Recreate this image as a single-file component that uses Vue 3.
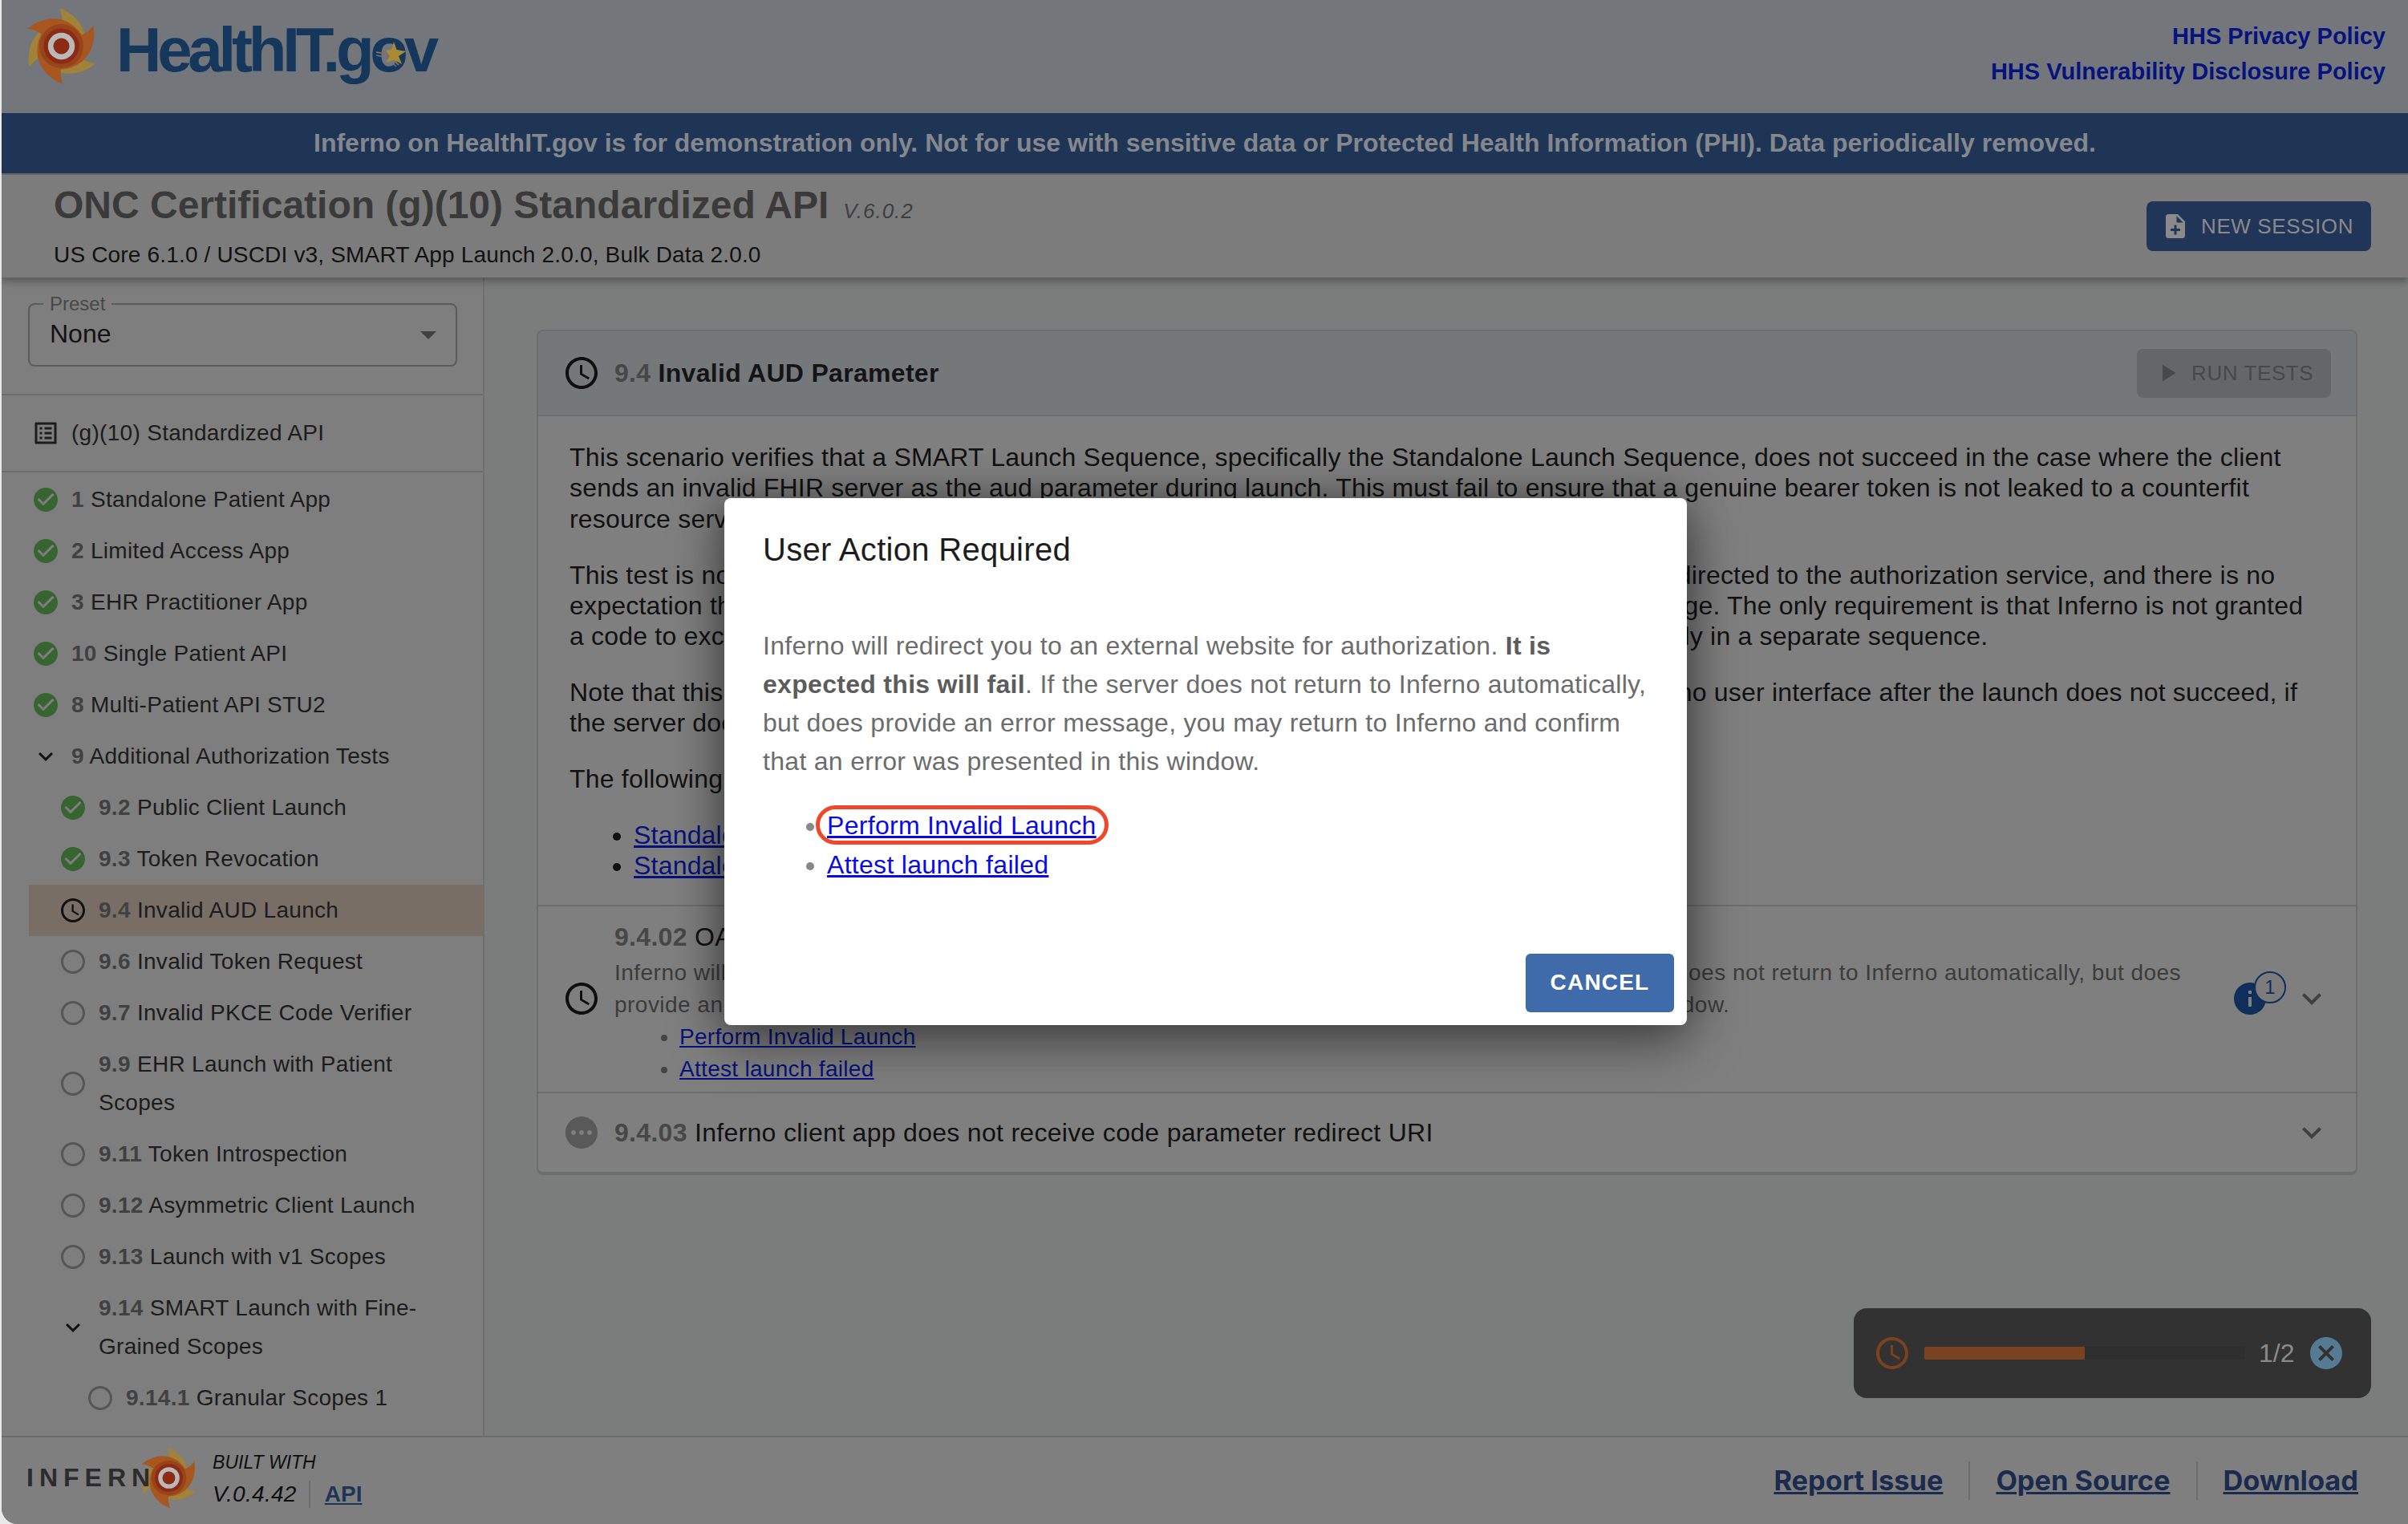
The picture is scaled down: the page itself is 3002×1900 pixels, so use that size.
<template>
  <div class="page">
    <header class="top-bar">
      <div class="brand">
        <svg class="swirl swirl-large" viewBox="-160 -160 320 320">
          <path v-for="blade in blades" :key="blade.angle" :fill="blade.color" :d="bladePath" :transform="`rotate(${blade.angle})`" />
          <circle r="82" fill="#97431c" />
          <circle r="66" fill="#8c2a14" />
          <circle r="50" fill="#b9b9b9" />
          <circle r="30" fill="#8c2a14" />
        </svg>
        <span class="brand-name">HealthIT.gov</span>
        <svg class="brand-star" viewBox="0 0 44 44">
          <path d="M3 19Q18 20 31 35" fill="none" stroke="#8a6a62" stroke-width="2" />
          <path d="M3 23Q16 24 28 37" fill="none" stroke="#5c7a98" stroke-width="1.5" />
          <path fill="#a98a34" d="M25 6l3.5 10L40 18l-9 6 4 10-9-5-11 3 5-8-5-7 7-1z" />
        </svg>
      </div>
      <nav class="policy-links">
        <a>HHS Privacy Policy</a>
        <a>HHS Vulnerability Disclosure Policy</a>
      </nav>
    </header>

    <div class="banner">
      Inferno on HealthIT.gov is for demonstration only. Not for use with sensitive data or Protected Health Information (PHI). Data periodically removed.
    </div>

    <section class="suite-bar">
      <div>
        <div class="suite-title">
          <h1>ONC Certification (g)(10) Standardized API</h1>
          <span class="suite-version">V.6.0.2</span>
        </div>
        <div class="suite-sub">US Core 6.1.0 / USCDI v3, SMART App Launch 2.0.0, Bulk Data 2.0.0</div>
      </div>
      <button class="new-session">
        <svg viewBox="0 0 24 24"><path :d="icons.noteAdd" /></svg>
        NEW SESSION
      </button>
    </section>

    <div class="workspace">
      <aside class="sidebar">
        <div class="preset-wrap">
          <fieldset class="preset">
            <legend>Preset</legend>
            <span>None</span>
            <i class="preset-arrow"></i>
          </fieldset>
        </div>
        <div class="suite-link">
          <svg viewBox="0 0 24 24"><path :d="icons.listAlt" /></svg>
          <span>(g)(10) Standardized API</span>
        </div>
        <div
          v-for="item in treeItems"
          :key="item.num"
          class="tree-row"
          :class="[`level-${item.level}`, { selected: item.selected }]"
        >
          <svg :class="`status-${item.status}`" viewBox="0 0 24 24"><path :d="statusPath(item.status)" /></svg>
          <span class="tree-label"><b>{{ item.num }}</b> {{ item.title }}</span>
        </div>
      </aside>

      <main class="content">
        <article class="test-card">
          <div class="card-head">
            <svg class="big-icon" viewBox="0 0 24 24"><path :d="icons.clock" /></svg>
            <h2><b>9.4</b> Invalid AUD Parameter</h2>
            <button class="run-tests">
              <svg viewBox="0 0 24 24"><path :d="icons.play" /></svg>
              RUN TESTS
            </button>
          </div>

          <div class="card-text">
            <p>This scenario verifies that a SMART Launch Sequence, specifically the Standalone Launch Sequence, does not succeed in the case where the client<br />sends an invalid FHIR server as the aud parameter during launch. This must fail to ensure that a genuine bearer token is not leaked to a counterfit<br />resource server.</p>
            <p>This test is not included in earlier scenario because there is not a requirement for a user to be redirected to the authorization service, and there is no<br />expectation that the authorization service will present a clearly visible error message upon the page. The only requirement is that Inferno is not granted<br />a code to exchange for a valid access token. Since this is a special case, it is tested independently in a separate sequence.</p>
            <p>Note that this test will launch a new browser window. The user is requested to 'Attest' in the Inferno user interface after the launch does not succeed, if<br />the server does not return an error code.</p>
            <p>The following implementation specifications are relevant to this scenario:</p>
            <ul>
              <li><a>Standalone Launch Sequence (STU 1)</a></li>
              <li><a>Standalone Launch Sequence (STU 2)</a></li>
            </ul>
          </div>

          <div class="test-row">
            <svg class="big-icon" viewBox="0 0 24 24"><path :d="icons.clock" /></svg>
            <div class="test-body">
              <div class="test-title"><b>9.4.02</b> OAuth server does not redirect to the client</div>
              <div class="test-desc">Inferno will redirect you to an external website for authorization. It is expected this will fail. If the server does not return to Inferno automatically, but does<br />provide an error message, you may return to Inferno and confirm that an error was presented in this window.</div>
              <ul>
                <li><a>Perform Invalid Launch</a></li>
                <li><a>Attest launch failed</a></li>
              </ul>
            </div>
            <div class="info-badge">
              <svg viewBox="0 0 24 24"><path :d="icons.info" /></svg>
              <span class="badge-count">1</span>
            </div>
            <svg class="chevron" viewBox="0 0 24 24"><path :d="icons.expand" /></svg>
          </div>

          <div class="test-row last">
            <svg class="big-icon pending" viewBox="0 0 24 24"><path :d="icons.pending" /></svg>
            <div class="test-body">
              <div class="test-title"><b>9.4.03</b> Inferno client app does not receive code parameter redirect URI</div>
            </div>
            <svg class="chevron" viewBox="0 0 24 24"><path :d="icons.expand" /></svg>
          </div>
        </article>

        <div class="progress-toast">
          <svg class="toast-clock" viewBox="0 0 24 24"><path :d="icons.clock" /></svg>
          <div class="toast-track">
            <div class="toast-fill" :style="{ width: progress + '%' }"></div>
          </div>
          <span class="toast-count">1/2</span>
          <svg class="toast-close" viewBox="0 0 24 24"><path :d="icons.cancel" /></svg>
        </div>
      </main>
    </div>

    <footer class="page-footer">
      <div class="built-with">
        <div class="inferno-logo">
          <span>INFERN</span>
          <svg class="swirl swirl-small" viewBox="-160 -160 320 320">
            <path v-for="blade in blades" :key="blade.angle" :fill="blade.color" :d="bladePath" :transform="`rotate(${blade.angle})`" />
            <circle r="82" fill="#97431c" />
            <circle r="66" fill="#8c2a14" />
            <circle r="50" fill="#b9b9b9" />
            <circle r="30" fill="#8c2a14" />
          </svg>
        </div>
        <div class="built-text">
          <div class="built-label">BUILT WITH</div>
          <div class="built-version">
            <i>V.0.4.42</i>
            <a>API</a>
          </div>
        </div>
      </div>
      <nav class="footer-links">
        <a>Report Issue</a>
        <a>Open Source</a>
        <a>Download</a>
      </nav>
    </footer>

    <div class="modal-layer">
      <div class="modal">
        <h3>User Action Required</h3>
        <p>Inferno will redirect you to an external website for authorization. <b>It is expected this will fail</b>. If the server does not return to Inferno automatically, but does provide an error message, you may return to Inferno and confirm that an error was presented in this window.</p>
        <ul>
          <li><a class="circled">Perform Invalid Launch</a></li>
          <li><a>Attest launch failed</a></li>
        </ul>
        <div class="modal-actions">
          <button>CANCEL</button>
        </div>
      </div>
    </div>
  </div>
</template>

<script setup>
const icons = {
  check: 'M12 2C6.48 2 2 6.48 2 12s4.48 10 10 10 10-4.48 10-10S17.52 2 12 2zm-2 15l-5-5 1.41-1.41L10 14.17l7.59-7.59L19 8l-9 9z',
  clock: 'M11.99 2C6.47 2 2 6.48 2 12s4.47 10 9.99 10C17.52 22 22 17.52 22 12S17.52 2 11.99 2zM12 20c-4.42 0-8-3.58-8-8s3.58-8 8-8 8 3.58 8 8-3.58 8-8 8zm.5-13H11v6l5.25 3.15.75-1.23-4.5-2.67z',
  radio: 'M12 2C6.48 2 2 6.48 2 12s4.48 10 10 10 10-4.48 10-10S17.52 2 12 2zm0 18c-4.42 0-8-3.58-8-8s3.58-8 8-8 8 3.58 8 8-3.58 8-8 8z',
  expand: 'M16.59 8.59 12 13.17 7.41 8.59 6 10l6 6 6-6z',
  listAlt: 'M19 5v14H5V5h14m1.1-2H3.9c-.5 0-.9.4-.9.9v16.2c0 .4.4.9.9.9h16.2c.4 0 .9-.5.9-.9V3.9c0-.5-.5-.9-.9-.9zM11 7h6v2h-6V7zm0 4h6v2h-6v-2zm0 4h6v2h-6zM7 7h2v2H7zm0 4h2v2H7zm0 4h2v2H7z',
  pending: 'M12 2C6.48 2 2 6.48 2 12s4.48 10 10 10 10-4.48 10-10S17.52 2 12 2zM7 13.5c-.83 0-1.5-.67-1.5-1.5s.67-1.5 1.5-1.5 1.5.67 1.5 1.5-.67 1.5-1.5 1.5zm5 0c-.83 0-1.5-.67-1.5-1.5s.67-1.5 1.5-1.5 1.5.67 1.5 1.5-.67 1.5-1.5 1.5zm5 0c-.83 0-1.5-.67-1.5-1.5s.67-1.5 1.5-1.5 1.5.67 1.5 1.5-.67 1.5-1.5 1.5z',
  info: 'M12 2C6.48 2 2 6.48 2 12s4.48 10 10 10 10-4.48 10-10S17.52 2 12 2zm1 15h-2v-6h2v6zm0-8h-2V7h2v2z',
  noteAdd: 'M14 2H6c-1.1 0-1.99.9-1.99 2L4 20c0 1.1.89 2 1.99 2H18c1.1 0 2-.9 2-2V8l-6-6zm2 14h-3v3h-2v-3H8v-2h3v-3h2v3h3v2zm-3-7V3.5L18.5 9H13z',
  play: 'M8 5v14l11-7z',
  cancel: 'M12 2C6.47 2 2 6.47 2 12s4.47 10 10 10 10-4.47 10-10S17.53 2 12 2zm5 13.59L15.59 17 12 13.41 8.41 17 7 15.59 10.59 12 7 8.41 8.41 7 12 10.59 15.59 7 17 8.41 13.41 12 17 15.59z',
};

const statusPath = (status) => icons[status];

const bladePath = 'M-7 -142C40 -125 92 -80 90 -15C88 30 70 60 45 73L0 0L-3 -70C5 -90 5 -115 -7 -142Z';

const blades = [
  { angle: 0, color: '#a08338' },
  { angle: 120, color: '#a08338' },
  { angle: 240, color: '#a08338' },
  { angle: 60, color: '#a8561f' },
  { angle: 180, color: '#a8561f' },
  { angle: 300, color: '#a8561f' },
];

const treeItems = [
  { num: '1', title: 'Standalone Patient App', level: 0, status: 'check' },
  { num: '2', title: 'Limited Access App', level: 0, status: 'check' },
  { num: '3', title: 'EHR Practitioner App', level: 0, status: 'check' },
  { num: '10', title: 'Single Patient API', level: 0, status: 'check' },
  { num: '8', title: 'Multi-Patient API STU2', level: 0, status: 'check' },
  { num: '9', title: 'Additional Authorization Tests', level: 0, status: 'expand' },
  { num: '9.2', title: 'Public Client Launch', level: 1, status: 'check' },
  { num: '9.3', title: 'Token Revocation', level: 1, status: 'check' },
  { num: '9.4', title: 'Invalid AUD Launch', level: 1, status: 'clock', selected: true },
  { num: '9.6', title: 'Invalid Token Request', level: 1, status: 'radio' },
  { num: '9.7', title: 'Invalid PKCE Code Verifier', level: 1, status: 'radio' },
  { num: '9.9', title: 'EHR Launch with Patient Scopes', level: 1, status: 'radio' },
  { num: '9.11', title: 'Token Introspection', level: 1, status: 'radio' },
  { num: '9.12', title: 'Asymmetric Client Launch', level: 1, status: 'radio' },
  { num: '9.13', title: 'Launch with v1 Scopes', level: 1, status: 'radio' },
  { num: '9.14', title: 'SMART Launch with Fine-Grained Scopes', level: 1, status: 'expand' },
  { num: '9.14.1', title: 'Granular Scopes 1', level: 2, status: 'radio' },
];

const progress = 50;
</script>

<style>
html,
body {
  margin: 0;
  background: #e9e9e9;
}
</style>

<style scoped>
.page {
  position: relative;
  display: flex;
  flex-direction: column;
  height: 1900px;
  margin-left: 2px;
  overflow: hidden;
  border-bottom-left-radius: 20px;
  background: #7b7d7c;
  font-family: "Liberation Sans", Arial, sans-serif;
  color: #141414;
}

svg {
  display: block;
  flex: none;
  fill: currentColor;
}

/* Top bar */
.top-bar {
  display: flex;
  justify-content: space-between;
  align-items: center;
  height: 141px;
  padding: 0 28px 0 21px;
  background: #73777b;
  box-sizing: border-box;
}

.brand {
  position: relative;
  display: flex;
  align-items: center;
  gap: 15px;
}

.swirl-large {
  width: 107px;
  height: 107px;
  margin-top: -27px;
}

.brand-name {
  margin-top: -16px;
  font-size: 78px;
  font-weight: 700;
  letter-spacing: -5.2px;
  color: #15375c;
}

.brand-star {
  position: absolute;
  left: 443px;
  top: 15px;
  width: 44px;
  height: 44px;
}

.policy-links {
  display: flex;
  flex-direction: column;
  align-items: flex-end;
  gap: 11px;
  margin-top: -6px;
  font-size: 29px;
  font-weight: 700;
  line-height: 33px;
}

.policy-links a {
  text-decoration: none;
}

.banner {
  height: 75px;
  border-bottom: 2px solid #6c6c6c;
  background: #1f3556;
  color: #84888d;
  font-size: 32px;
  font-weight: 700;
  line-height: 75px;
  text-align: center;
}

/* Suite bar */
.suite-bar {
  position: relative;
  z-index: 2;
  display: flex;
  justify-content: space-between;
  align-items: center;
  height: 128px;
  padding: 0 46px 0 65px;
  background: #7c7c7c;
  box-shadow: 0 4px 10px rgba(0, 0, 0, 0.35);
  box-sizing: border-box;
}

.suite-title {
  display: flex;
  align-items: baseline;
  gap: 18px;
  margin-top: -4px;
}

.suite-title h1 {
  margin: 0;
  font-size: 48px;
  font-weight: 700;
  line-height: 60px;
  color: #3a3a3a;
}

.suite-version {
  font-size: 26px;
  font-style: italic;
  letter-spacing: 1px;
  color: #3f3f3f;
}

.suite-sub {
  margin-top: 15px;
  font-size: 28px;
  line-height: 34px;
  letter-spacing: 0.17px;
  color: #111;
}

.new-session {
  display: flex;
  align-items: center;
  gap: 14px;
  width: 280px;
  height: 62px;
  padding: 0 0 0 18px;
  border: 0;
  border-radius: 8px;
  background: #203558;
  color: #8a8a8a;
  font: 26px "Liberation Sans", Arial, sans-serif;
  letter-spacing: 0.6px;
}

.new-session svg {
  width: 36px;
  height: 36px;
}

/* Sidebar */
.workspace {
  flex: 1;
  display: flex;
  min-height: 0;
}

.sidebar {
  width: 600px;
  flex: none;
  border-right: 2px solid #707070;
  background: #7e7e7e;
  overflow: hidden;
}

.preset-wrap {
  padding: 21px 32px 34px 33px;
  border-bottom: 2px solid #6c6c6c;
}

.preset {
  position: relative;
  display: flex;
  align-items: center;
  height: 90px;
  margin: 0;
  padding: 0 25px;
  border: 2px solid #5c5c5c;
  border-radius: 8px;
  box-sizing: border-box;
  font-size: 32px;
  color: #121212;
}

.preset legend {
  margin-left: -8px;
  padding: 0 8px;
  font-size: 24px;
  line-height: 24px;
  color: #484848;
}

.preset span {
  margin-top: -14px;
}

.preset-arrow {
  position: absolute;
  right: 24px;
  top: 22px;
  border-left: 10px solid transparent;
  border-right: 10px solid transparent;
  border-top: 10px solid #3f3f3f;
}

.suite-link {
  display: flex;
  align-items: center;
  gap: 14px;
  height: 96px;
  padding-left: 37px;
  border-bottom: 2px solid #6c6c6c;
  box-sizing: border-box;
  font-size: 28px;
  letter-spacing: 0.3px;
  color: #1c1c1c;
}

.suite-link svg {
  width: 36px;
  height: 36px;
}

.tree-row {
  display: flex;
  align-items: center;
  gap: 14px;
  padding: 8px 40px 8px 37px;
  font-size: 28px;
  line-height: 48px;
  letter-spacing: 0.3px;
  color: #1c1c1c;
}

.suite-link + .tree-row {
  margin-top: 2px;
}

.tree-row svg {
  width: 36px;
  height: 36px;
}

.tree-row b {
  font-weight: 700;
  color: #414141;
}

.level-1 {
  margin-left: 34px;
}

.level-2 {
  margin-left: 68px;
}

.selected {
  background: #786e66;
}

.status-check {
  color: #37652f;
}

.status-radio {
  color: #565656;
}

.status-clock,
.status-expand {
  color: #111;
}

/* Main content */
.content {
  position: relative;
  flex: 1;
  padding: 65px 63px 0 65px;
  background: #7b7d7c;
}

.test-card {
  border: 2px solid #6d6d6d;
  border-bottom-width: 4px;
  border-radius: 8px;
  background: #7f7f7f;
  overflow: hidden;
}

.card-head {
  display: flex;
  align-items: center;
  gap: 17px;
  height: 106px;
  padding: 0 31px 0 30px;
  border-bottom: 2px solid #6d6d6d;
  background: #74787b;
  box-sizing: border-box;
}

.card-head h2 {
  flex: 1;
  margin: 0;
  font-size: 32px;
  font-weight: 700;
  letter-spacing: 0.3px;
  color: #141414;
}

.card-head b,
.test-title b {
  color: #474747;
}

.big-icon {
  width: 48px;
  height: 48px;
  color: #0f0f0f;
}

.big-icon.pending {
  color: #595959;
}

.run-tests {
  display: flex;
  align-items: center;
  gap: 12px;
  width: 242px;
  height: 61px;
  padding: 0 0 0 20px;
  border: 0;
  border-radius: 8px;
  background: #63676a;
  color: #45494b;
  font: 26px "Liberation Sans", Arial, sans-serif;
  letter-spacing: 0.6px;
}

.run-tests svg {
  width: 36px;
  height: 36px;
}

.card-text {
  padding: 32px 39px 29px;
  font-size: 32px;
  line-height: 38.4px;
  letter-spacing: 0.2px;
  color: #111;
  border-bottom: 2px solid #6d6d6d;
}

.card-text p {
  margin: 0 0 31.3px;
}

.card-text ul {
  margin: 0;
  padding-left: 80px;
}

a {
  color: #06127e;
  text-decoration: underline;
}

.test-row {
  display: flex;
  align-items: center;
  gap: 17px;
  min-height: 233px;
  padding: 0 31px 0 30px;
  border-bottom: 2px solid #6d6d6d;
  box-sizing: border-box;
}

.test-row.last {
  min-height: 98px;
  border-bottom: 0;
}

.test-body {
  flex: 1;
  margin-top: 10px;
}

.test-row.last .test-body {
  margin-top: 0;
}

.test-title {
  font-size: 32px;
  line-height: 40px;
  letter-spacing: 0.3px;
  color: #111;
}

.test-desc {
  margin-top: 5px;
  font-size: 28px;
  line-height: 40px;
  letter-spacing: 0.47px;
  color: #3c3c3c;
}

.test-body ul {
  margin: 0;
  padding-left: 81px;
  font-size: 28px;
  line-height: 40px;
  letter-spacing: 0.3px;
  color: #444;
}

.info-badge {
  position: relative;
  width: 48px;
  height: 48px;
  margin-right: 12px;
  color: #0f2f5a;
}

.info-badge svg {
  width: 48px;
  height: 48px;
}

.badge-count {
  position: absolute;
  left: 29px;
  top: -10px;
  width: 36px;
  height: 36px;
  border: 2px solid #0f2f5a;
  border-radius: 50%;
  background: #7c7c7c;
  font-size: 24px;
  line-height: 36px;
  text-align: center;
}

.chevron {
  width: 48px;
  height: 48px;
  color: #404040;
}

.progress-toast {
  position: absolute;
  right: 46px;
  bottom: 47px;
  display: flex;
  align-items: center;
  width: 645px;
  height: 112px;
  padding-left: 24px;
  border-radius: 16px;
  background: #323232;
  box-sizing: border-box;
}

.toast-clock {
  width: 48px;
  height: 48px;
  color: #7a421e;
}

.toast-track {
  width: 400px;
  height: 16px;
  margin-left: 16px;
  background: #2f2f2f;
}

.toast-fill {
  height: 100%;
  border-radius: 2px 0 0 2px;
  background: #7a421e;
}

.toast-count {
  margin-left: 17px;
  font-size: 32px;
  color: #8a8a8a;
}

.toast-close {
  width: 48px;
  height: 48px;
  margin-left: 16px;
  color: #557a93;
}

/* Footer */
.page-footer {
  display: flex;
  justify-content: space-between;
  align-items: center;
  height: 110px;
  padding: 0 62px 0 31px;
  border-top: 2px solid #6c6c6c;
  background: #7f7f7f;
  box-sizing: border-box;
}

.built-with {
  display: flex;
  align-items: center;
  gap: 12px;
}

.inferno-logo {
  display: flex;
  align-items: center;
  margin-top: -8px;
  font-size: 32px;
  font-weight: 700;
  letter-spacing: 7px;
  color: #2c2c2c;
}

.inferno-logo span {
  position: relative;
  z-index: 1;
}

.swirl-small {
  width: 85px;
  height: 85px;
  margin-left: -26px;
}

.built-text {
  margin-top: -6px;
}

.built-label {
  font-size: 23px;
  font-style: italic;
  line-height: 34px;
  color: #0e0e0e;
}

.built-version {
  display: flex;
  align-items: center;
  margin-top: 6px;
  font-size: 28px;
  line-height: 34px;
  color: #0e0e0e;
}

.built-version i {
  padding-right: 15px;
  border-right: 2px solid #6c6c6c;
  letter-spacing: 0.3px;
}

.built-version a {
  margin-left: 18px;
  color: #1e3557;
  font-weight: 700;
}

.footer-links {
  display: flex;
  align-items: center;
  font-family: Inter, "Liberation Sans", sans-serif;
  font-size: 34.4px;
  font-weight: 700;
}

.footer-links a {
  height: 48px;
  padding: 0 32px;
  color: #1a2b4d;
  line-height: 48px;
}

.footer-links a + a {
  border-left: 2px solid #6c6c6c;
}

.footer-links a:last-child {
  padding-right: 0;
}

/* Modal */
.modal-layer {
  position: absolute;
  inset: 0;
  z-index: 5;
  display: flex;
  justify-content: center;
  align-items: center;
  padding: 0 0 2px 2px;
}

.modal {
  width: 1200px;
  height: 657px;
  padding-top: 32px;
  border-radius: 8px;
  background: #fff;
  box-shadow: 0 22px 70px rgba(0, 0, 0, 0.4), 0 0 50px rgba(0, 0, 0, 0.3);
  box-sizing: border-box;
}

.modal h3 {
  margin: 0;
  padding: 0 48px;
  font-size: 40px;
  font-weight: 400;
  line-height: 64px;
  letter-spacing: 0.3px;
  color: #1d1d1d;
}

.modal p {
  margin: 64px 0 0;
  padding: 0 48px;
  font-size: 32px;
  line-height: 48.2px;
  letter-spacing: 0.3px;
  color: #6c6c6c;
}

.modal b {
  color: #5c5c5c;
}

.modal ul {
  margin: 32px 0 0;
  padding: 0 0 0 128px;
  font-size: 32px;
  line-height: 48.2px;
  letter-spacing: 0.3px;
  color: #888;
}

.modal a {
  color: #0a0ae6;
}

.circled {
  position: relative;
}

.circled::after {
  content: "";
  position: absolute;
  left: -14px;
  right: -15px;
  top: -7px;
  bottom: -6px;
  border: 5px solid #f0472a;
  border-radius: 28px;
}

.modal-actions {
  display: flex;
  justify-content: flex-end;
  margin-top: 87px;
  padding-right: 16px;
}

.modal-actions button {
  width: 185px;
  height: 73px;
  border: 0;
  border-radius: 6px;
  background: #3f6bab;
  color: #fff;
  font: 700 28px "Liberation Sans", Arial, sans-serif;
  letter-spacing: 1.2px;
}
</style>
